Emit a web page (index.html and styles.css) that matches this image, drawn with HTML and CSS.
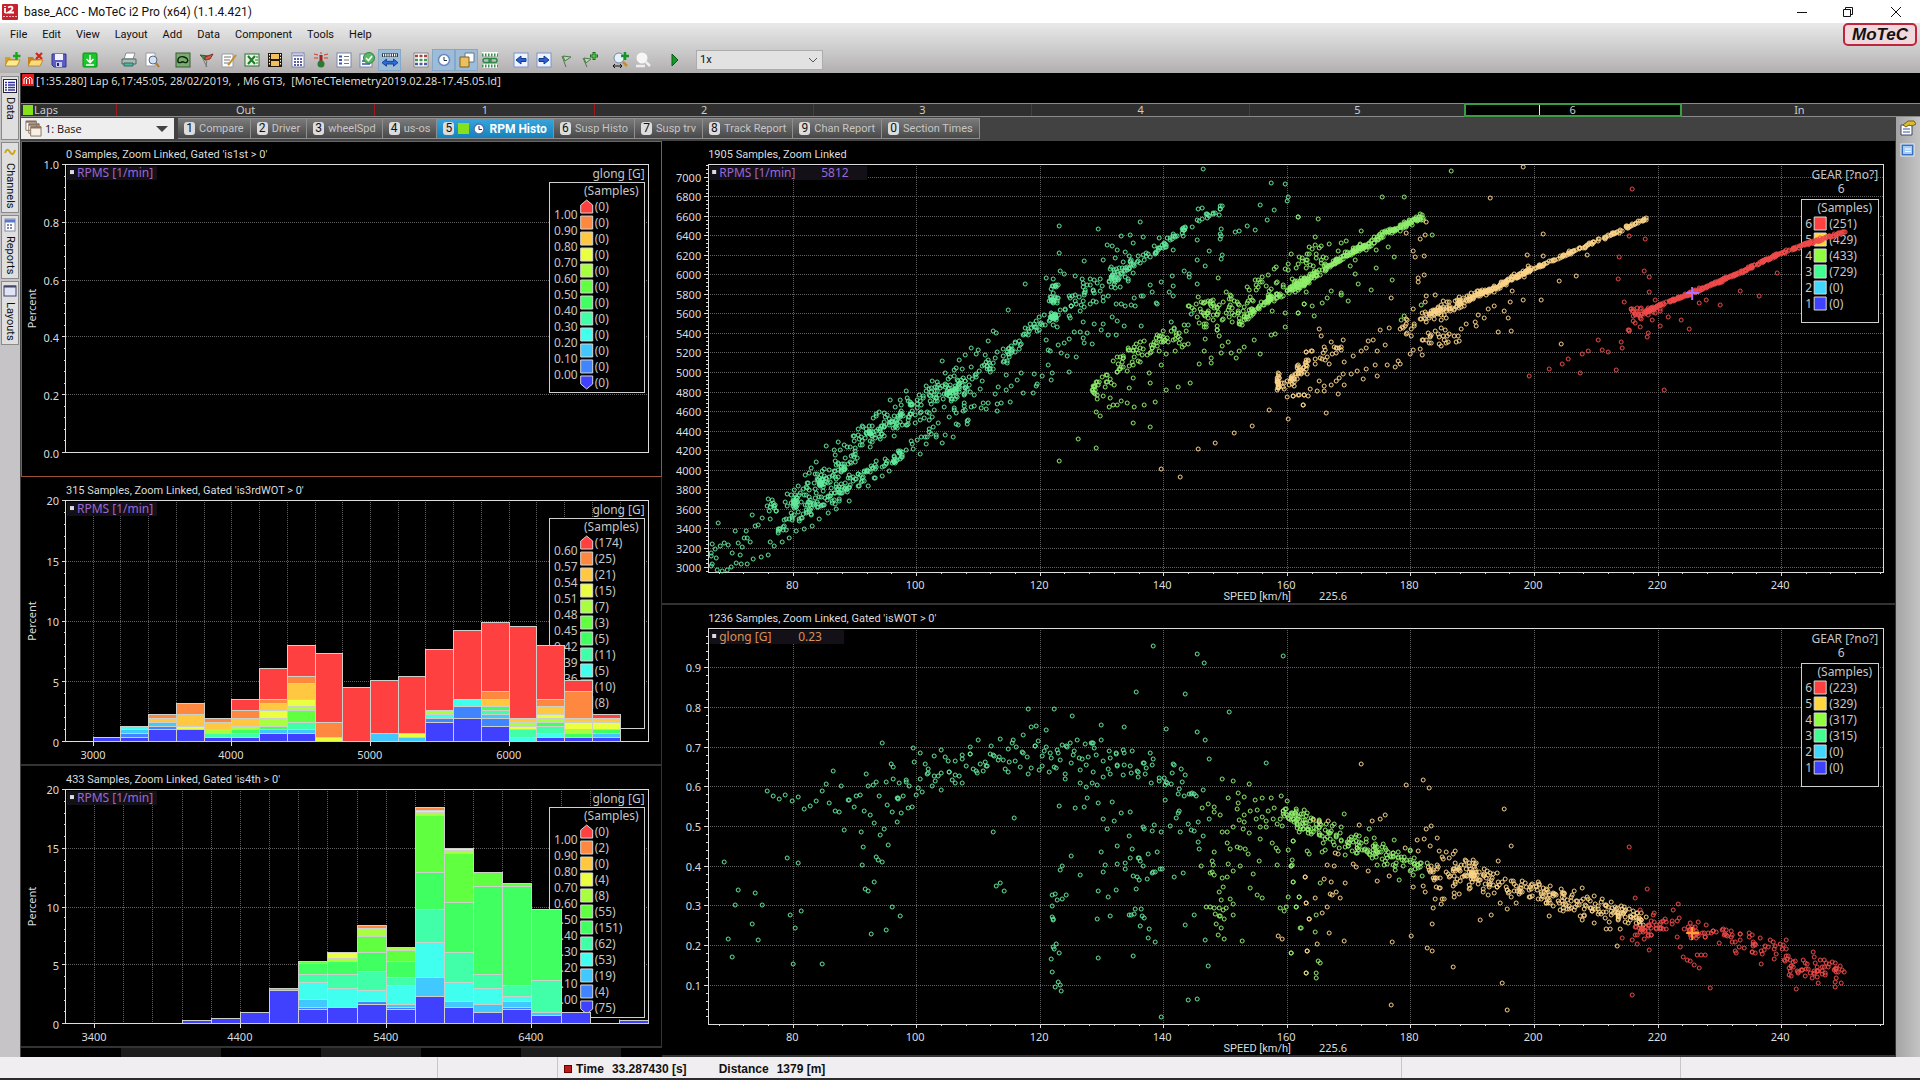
FILE: index.html
```html
<!DOCTYPE html>
<html lang="en">
<head>
<meta charset="utf-8">
<title>base_ACC - MoTeC i2 Pro (x64) (1.1.4.421)</title>
<link rel="stylesheet" href="styles.css">
</head>
<body>
<header class="titlebar">
  <svg class="app-icon" viewBox="0 0 16 16"><rect width="16" height="16" rx="1" fill="#c8202c"/><path d="M3 4v5M3 2v1M6 3.500q4-2 4.500.5q0 2-4.500 4.500h6" fill="none" stroke="#fff" stroke-width="1.800"/><path d="M1 12.500h14" stroke="#f3b4b8" stroke-dasharray="2 1"/></svg>
  <h1 class="title">base_ACC - MoTeC i2 Pro (x64) (1.1.4.421)</h1>
  <div class="window-buttons">
    <button aria-label="Minimize"><svg viewBox="0 0 12 12"><path d="M1 6.500h10"/></svg></button>
    <button aria-label="Restore"><svg viewBox="0 0 12 12"><path d="M1.500 3.500h7v7h-7zM3.500 3V1.500h7v7H9"/></svg></button>
    <button aria-label="Close"><svg viewBox="0 0 12 12"><path d="M1 1l10 10M11 1L1 11"/></svg></button>
  </div>
</header>

<div class="command-area">
  <div class="menu-row">
    <nav class="menu">
      <button>File</button><button>Edit</button><button>View</button><button>Layout</button><button>Add</button><button>Data</button><button>Component</button><button>Tools</button><button>Help</button>
    </nav>
    <div class="brand">MoTeC</div>
  </div>
  <div class="toolbar">
    <div class="tool-group">
      <button aria-label="Open log file"><svg viewBox="0 0 16 16"><path d="M0 14V5h5l1 2h6v7z" fill="#d8a020"/><path d="M0 14l3-6h12l-3 6z" fill="#ffe98a" stroke="#a87810" stroke-width=".7"/><path d="M11.500 0v8M8 4h7.500" stroke="#18a818" stroke-width="2.400"/></svg></button>
      <button aria-label="Close log file"><svg viewBox="0 0 16 16"><path d="M0 14V5h5l1 2h6v7z" fill="#c88018"/><path d="M0 14l3-6h12l-3 6z" fill="#ffd87a" stroke="#a87810" stroke-width=".7"/><path d="M8 1l6 6M14 1L8 7" stroke="#d02818" stroke-width="2.200"/></svg></button>
      <button aria-label="Save"><svg viewBox="0 0 16 16"><path d="M1 2h14v13H3l-2-2z" fill="#5c5cc4" stroke="#34348c"/><path d="M4 2h8v6H4z" fill="#f0f2ff"/><path d="M5 10h6v5H5z" fill="#c8ccea"/><path d="M6 11h2v3H6z" fill="#26267a"/></svg></button>
    </div>
    <div class="tool-group">
      <button aria-label="Download"><svg viewBox="0 0 16 16"><rect x="1" y="1" width="14" height="14" rx="1" fill="#18c828" stroke="#0c8c1a"/><path d="M8 3v7M4.500 7L8 10.500 11.500 7M4 13h8" fill="none" stroke="#fff" stroke-width="1.600"/></svg></button>
    </div>
    <div class="tool-group spaced">
      <button aria-label="Print"><svg viewBox="0 0 16 16"><path d="M5 1h9l-2 6H3z" fill="#fff" stroke="#889"/><path d="M1 7h14v5H1z" fill="#a8bcb4" stroke="#4a6a62"/><path d="M3 11h9v3H3z" fill="#48b8a0" stroke="#3a6a62"/></svg></button>
      <button aria-label="Print preview"><svg viewBox="0 0 16 16"><path d="M2 1h9v13H2z" fill="#fff" stroke="#99a"/><circle cx="9" cy="8" r="4" fill="#cfe4fa" stroke="#667"/><path d="M12 11l3 4" stroke="#b07820" stroke-width="2"/></svg></button>
    </div>
    <div class="tool-group">
      <button aria-label="Track map"><svg viewBox="0 0 16 16"><rect x="1" y="1" width="14" height="14" fill="#7aac72" stroke="#385c34"/><path d="M3 10c-1-5 3-6 6-5s5 3 3 5-3-1-5 0-3 1-4 0z" fill="none" stroke="#0a2408" stroke-width="1.400"/></svg></button>
      <button aria-label="Events"><svg viewBox="0 0 16 16"><path d="M2 3l8 1-3 4z" fill="#488838" stroke="#355"/><path d="M7 5l8-3-3 5-5 1z" fill="#d85838" stroke="#733"/><path d="M4 5l5 10M9 7l-1 8" stroke="#777"/></svg></button>
      <button aria-label="Edit notes"><svg viewBox="0 0 16 16"><path d="M1 2h11v13H1z" fill="#fff" stroke="#99a"/><path d="M3 5h7M3 8h6M3 11h5" stroke="#777"/><path d="M15 3l-7 9-1 1" stroke="#c09028" stroke-width="2"/></svg></button>
      <button aria-label="Export to Excel"><svg viewBox="0 0 16 16"><rect x="1" y="2" width="14" height="12" fill="#e8f4e4" stroke="#2c7030"/><path d="M4 4l7 8M11 4l-7 8" stroke="#1f7a28" stroke-width="2"/><path d="M11 8h3M12 5h2M12 11h2" stroke="#1f7a28"/></svg></button>
      <button aria-label="Video"><svg viewBox="0 0 16 16"><rect x="1" y="1" width="14" height="14" fill="#241808"/><path d="M4 2h8v5H4zM4 9h8v5H4z" fill="#f0c060"/><path d="M2.500 2v12M13.500 2v12" stroke="#fff" stroke-dasharray="1.500 1.500"/></svg></button>
      <button aria-label="Maths"><svg viewBox="0 0 16 16"><rect x="2" y="1" width="12" height="14" fill="#fff" stroke="#7880b0"/><path d="M3 3.500h10" stroke="#8890c8" stroke-width="2"/><path d="M4 7h8M4 10h8M4 13h8" stroke="#5860a0" stroke-width="1.800" stroke-dasharray="2 1"/></svg></button>
      <button aria-label="Alarms"><svg viewBox="0 0 16 16"><path d="M8 3v9" stroke="#a02020" stroke-width="3"/><circle cx="8" cy="12" r="3.500" fill="#2a7a34"/><path d="M1 2l4 1M1 6h4M15 2l-4 1M15 6h-4M8 0v2" stroke="#d83828"/></svg></button>
      <button aria-label="Details"><svg viewBox="0 0 16 16"><rect x="1" y="1" width="14" height="14" fill="#fff" stroke="#7a88a8"/><path d="M3 4.500h3M3 8h3M3 11.500h3" stroke="#3858a8" stroke-width="2"/><path d="M8 4.500h5M8 8h5M8 11.500h5" stroke="#777"/></svg></button>
      <button aria-label="Check channels"><svg viewBox="0 0 16 16"><rect x="1" y="2" width="12" height="13" fill="#fff" stroke="#7a88a8"/><path d="M3 12h8M3 9h3" stroke="#3858a8" stroke-width="1.500"/><circle cx="10" cy="6" r="5.500" fill="#58b868" stroke="#358044"/><path d="M7 6l2.500 2.500L13 4" fill="none" stroke="#fff" stroke-width="1.600"/></svg></button>
      <button class="on" aria-label="Zoom linked"><svg viewBox="0 0 18 16"><path d="M0 2.500h18" stroke="#123" stroke-width="4"/><path d="M1 2.500h16" stroke="#fff" stroke-width="3" stroke-dasharray="1.500 1"/><path d="M0 11l5-4v2.500h8V7l5 4-5 4v-2.500H5V15z" fill="#2c6cd8" stroke="#123c8c"/></svg></button>
    </div>
    <div class="tool-group">
      <button aria-label="Channel grid"><svg viewBox="0 0 16 16"><rect x="1" y="1" width="14" height="14" fill="#fff" stroke="#888"/><path d="M2 4h12" stroke="#a04848" stroke-width="2.500" stroke-dasharray="3 1.500"/><path d="M2 8h12" stroke="#48984c" stroke-width="2.500" stroke-dasharray="3 1.500"/><path d="M2 12h12" stroke="#4858a8" stroke-width="2.500" stroke-dasharray="3 1.500"/></svg></button>
      <button class="on" aria-label="Time mode"><svg viewBox="0 0 16 16"><circle cx="8" cy="8" r="5.500" fill="#fff" stroke="#6888c4" stroke-width="1.500"/><path d="M8 5v3.500h3" fill="none" stroke="#234"/></svg></button>
      <button class="on" aria-label="Overlays"><svg viewBox="0 0 16 16"><path d="M6 1h9v9H6z" fill="#fff" stroke="#678"/><path d="M1 5h9v10H1z" fill="#ecc060" stroke="#80601c"/></svg></button>
      <button aria-label="Link ranges"><svg viewBox="0 0 16 16"><path d="M0 2h16M0 14h16" stroke="#f4fff6" stroke-width="4"/><path d="M0 3h16M0 14h16" stroke="#468a56" stroke-width="3" stroke-dasharray="1.500 1.500"/><rect x="1" y="6.500" width="8" height="4" rx="2" fill="none" stroke="#2f8848" stroke-width="1.500"/><rect x="7" y="6.500" width="8" height="4" rx="2" fill="none" stroke="#2f8848" stroke-width="1.500"/></svg></button>
    </div>
    <div class="tool-group">
      <button aria-label="Previous lap"><svg viewBox="0 0 16 16"><rect x="1" y="1" width="14" height="14" fill="#eef4ff" stroke="#7a94cc"/><path d="M3 8l5-4v2.500h5v3H8V12z" fill="#2c60d0" stroke="#123c8c"/></svg></button>
      <button aria-label="Next lap"><svg viewBox="0 0 16 16"><rect x="1" y="1" width="14" height="14" fill="#eef4ff" stroke="#7a94cc"/><path d="M13 8L8 4v2.500H3v3h5V12z" fill="#2c60d0" stroke="#123c8c"/></svg></button>
      <button aria-label="Marker"><svg viewBox="0 0 16 16"><path d="M3 4l4 11M4 4l8 1-6 4z" fill="#b8dcae" stroke="#4c7a4c"/></svg></button>
      <button aria-label="Add marker"><svg viewBox="0 0 16 16"><path d="M1 6l4 9M2 6l7 1-5 4z" fill="#b8dcae" stroke="#4c7a4c"/><path d="M12 0v8M8 4h8" stroke="#1c6c20" stroke-width="3"/><path d="M12 1v6M9 4h6" stroke="#60e050"/></svg></button>
    </div>
    <div class="tool-group">
      <button aria-label="Zoom in"><svg viewBox="0 0 16 16"><circle cx="6" cy="6" r="5" fill="#e4f2fc" stroke="#789"/><path d="M10 10l4 4" stroke="#c09030" stroke-width="2.500"/><path d="M12 0v8M8 4h8" stroke="#18942a" stroke-width="2.500"/><path d="M0 14h9M2 12l-2 2 2 2M7 12l2 2-2 2" fill="none" stroke="#111"/></svg></button>
      <button aria-label="Zoom out" disabled><svg viewBox="0 0 16 16"><circle cx="6" cy="6" r="5.500" fill="#f6f6f6"/><path d="M10 10l4 4M0 14h9" stroke="#eee" stroke-width="2.500"/></svg></button>
    </div>
    <div class="tool-group">
      <button aria-label="Play"><svg viewBox="0 0 16 16"><path d="M5 2l6 6-6 6z" fill="#109a28" stroke="#0c5c18"/></svg></button>
    </div>
    <div class="speed-box">
      <select aria-label="Playback speed"><option>1x</option></select>
      <svg viewBox="0 0 10 6"><path d="M1 1l4 4 4-4" fill="none" stroke="#555"/></svg>
    </div>
  </div>
</div>

<main class="body">
  <aside class="side-tabs">
    <button><svg viewBox="0 0 14 14"><rect x=".5" y=".5" width="13" height="13" fill="#fff" stroke="#223"/><path d="M2 3.500h10M2 6h10M2 8.500h10M2 11h10" stroke="#3030a0" stroke-width="1.500"/><path d="M4.500 1v12" stroke="#fff"/></svg><span>Data</span></button>
    <button><svg viewBox="0 0 14 14"><path d="M2 8q2-6 5-1t5-2" fill="none" stroke="#c8a818" stroke-width="2"/></svg><span>Channels</span></button>
    <button><svg viewBox="0 0 14 14"><rect x="2" y="1" width="10" height="12" fill="#fff" stroke="#88a"/><path d="M2 3h10" stroke="#5878c8" stroke-width="3"/><path d="M4 7h6M4 10h6" stroke="#88a" stroke-width="2" stroke-dasharray="2 1"/></svg><span>Reports</span></button>
    <button><svg viewBox="0 0 14 14"><rect x="1" y="2" width="12" height="10" fill="#dfe4f6" stroke="#446"/><path d="M1 2.500h12" stroke="#446" stroke-width="2"/></svg><span>Layouts</span></button>
  </aside>

  <section class="center">
    <div class="log-info">
      <svg viewBox="0 0 12 12"><rect width="12" height="12" fill="#e02020"/><path d="M2 10V5l2-2 2 2 2-2 2 2v5M4.500 5v5M7.500 5v5" fill="none" stroke="#fff"/></svg>
      <span>[1:35.280] Lap 6,17:45:05, 28/02/2019,&nbsp; , M6 GT3,&nbsp; [MoTeCTelemetry2019.02.28-17.45.05.ld]</span>
    </div>
    <div class="laps">
      <div class="laps-label"><i></i>Laps</div>
      <ol>
        <li class="w258">Out</li><li class="w220">1</li><li class="w218">2</li><li class="w218">3</li><li class="w218">4</li><li class="w215">5</li><li class="w217 current">6</li><li class="w238">In</li>
      </ol>
    </div>
    <div class="lower">
      <div class="work">
        <div class="sheet-row">
          <div class="layout-box">
            <svg viewBox="0 0 18 18"><path d="M1 1h11v10H1zM4 4h11v10H4z" fill="#fff" stroke="#8a7460"/><path d="M6 7h11v10H6z" fill="#f8f0e4" stroke="#8a7460"/><path d="M1 2h11M4 5h11M6 8h11" stroke="#8a7460" stroke-width="2"/></svg>
            <select aria-label="Workbook"><option>1: Base</option></select>
            <svg class="arrow" viewBox="0 0 12 6"><path d="M0 0h12L6 6z" fill="#444"/></svg>
          </div>
          <div class="sheets">
            <button><b>1</b>Compare</button><button><b>2</b>Driver</button><button><b>3</b>wheelSpd</button><button><b>4</b>us-os</button><button class="active"><b>5</b><i></i><svg viewBox="0 0 12 12"><circle cx="6" cy="6" r="5" fill="#fff" stroke="#5070b0" stroke-width="1.500"/><path d="M6 3v3.500h3" fill="none" stroke="#234"/></svg>RPM Histo</button><button><b>6</b>Susp Histo</button><button><b>7</b>Susp trv</button><button><b>8</b>Track Report</button><button><b>9</b>Chan Report</button><button><b>0</b>Section Times</button>
          </div>
        </div>
        <div class="workspace">
          <div class="column histograms">
            <div class="panel selected" id="histo-1st"></div>
            <div class="panel" id="histo-3rd"></div>
            <div class="panel" id="histo-4th"></div>
            <div class="scroll-strip"></div>
          </div>
          <div class="column scatters">
            <div class="panel" id="scatter-rpm"></div>
            <div class="panel" id="scatter-glong"></div>
          </div>
        </div>
      </div>
      <aside class="right-bar">
        <button aria-label="Properties"><svg viewBox="0 0 16 16"><path d="M1 5h11v10H1z" fill="#fff" stroke="#446"/><path d="M3 9h7M3 12h7" stroke="#3850a8"/><path d="M3 5l5-4 6 0 2 3-4 2-3-1-3 2z" fill="#d8bc30" stroke="#776010"/></svg></button>
        <button aria-label="Component view"><svg viewBox="0 0 16 16"><rect x="1" y="2" width="13" height="12" fill="#3870c0" stroke="#e8f0fa"/><path d="M3 4h9v8H3z" fill="#a8ccf4"/><path d="M5 7h6M5 9.500h6" stroke="#fff"/></svg></button>
      </aside>
    </div>
  </section>
</main>

<footer class="status">
  <div class="s439"></div><div class="s120"></div>
  <div class="s841 readout"><i></i><span>Time</span><span>33.287430 [s]</span><span class="dist">Distance</span><span>1379 [m]</span></div>
  <div class="s280"></div><div class="s240"></div>
</footer>
<script src="charts.js"></script>
</body>
</html>
```
FILE: styles.css
```css
* { box-sizing: border-box; }
html, body { height: 100%; }
body {
  margin: 0;
  display: flex;
  flex-direction: column;
  background: #000;
  font: 12px/14px "Roboto", sans-serif;
  color: #111;
  overflow: hidden;
}
button {
  border: 0;
  padding: 0;
  background: none;
  font: inherit;
  color: inherit;
}
svg { display: block; flex: none; }

/* Title bar */
.titlebar {
  flex: none;
  height: 23px;
  display: flex;
  align-items: center;
  background: #fff;
  padding-left: 2px;
}
.app-icon { width: 16px; height: 16px; }
.title { flex: 1; margin: 0 0 0 6px; font: 12px/16px "Roboto", sans-serif; }
.window-buttons { display: flex; }
.window-buttons button { width: 46px; display: grid; place-items: center; }
.window-buttons button:last-child { width: 49px; }
.window-buttons svg { width: 12px; height: 12px; fill: none; stroke: #111; }

/* Menu and toolbar */
.command-area {
  flex: none;
  height: 50px;
  background: linear-gradient(#e9e9e9, #c9c8c8 60%, #b1aeaf);
}
.menu-row { height: 24px; display: flex; justify-content: space-between; align-items: flex-start; }
.menu { display: flex; gap: 15px; padding: 5px 0 0 10px; font-size: 11px; line-height: 14px; }
.brand {
  width: 74px;
  height: 23px;
  margin-right: 3px;
  border: 2px solid #c0243c;
  border-radius: 5px;
  background: #f0d8dc;
  font: italic bold 17px/19px "Liberation Sans", sans-serif;
  text-align: center;
}
.toolbar { display: flex; align-items: center; gap: 8px; height: 25px; padding-left: 1px; }
.tool-group { display: flex; }
.tool-group.spaced { margin-left: 8px; }
.tool-group button { width: 23px; height: 22px; display: grid; place-items: center; }
.tool-group button.on { background: #9cbcd8; box-shadow: inset 0 0 0 1px #86a8c8; }
.tool-group svg { width: 16px; height: 16px; }
.speed-box {
  width: 127px;
  height: 20px;
  margin-left: 2px;
  display: flex;
  align-items: center;
  background: #e2e2e2;
  border: 1px solid #acacac;
  padding-right: 4px;
}
.speed-box svg { width: 10px; height: 6px; }
select { appearance: none; border: 0; background: none; flex: 1; min-width: 0; padding: 0; color: #111; }
.speed-box select { font: 11px/16px "Roboto", sans-serif; padding-left: 3px; }

/* Main body */
.body { flex: 1; min-height: 0; display: flex; }
.side-tabs {
  flex: none;
  width: 20px;
  padding: 3px 1px 0;
  display: flex;
  flex-direction: column;
  gap: 2px;
  background: #c6c4c6;
}
.side-tabs button {
  width: 18px;
  height: 64px;
  display: flex;
  flex-direction: column;
  align-items: center;
  justify-content: flex-start;
  gap: 4px;
  padding-top: 2px;
  border: 1px solid #8a8a8a;
  background: #e0dfe0;
  font: 11px/14px "Roboto", sans-serif;
}
.side-tabs button:nth-child(2) { height: 71px; }
.side-tabs svg { width: 14px; height: 14px; }
.side-tabs span { writing-mode: vertical-rl; }

.center { flex: 1; min-width: 0; display: flex; flex-direction: column; border-left: 1px solid #444; }
.log-info {
  flex: none;
  height: 30px;
  display: flex;
  gap: 2px;
  padding: 1px 0 0 1px;
  color: #d8d8d8;
  font: 11px/13px "Noto Sans", sans-serif;
}
.log-info svg { width: 12px; height: 12px; }
.laps {
  flex: none;
  height: 14px;
  display: flex;
  padding-right: 2px;
  background: #2f2f30;
  border: solid #8a8a8a;
  border-width: 1px 0;
  color: #ccc;
  font: 11px/12px "Noto Sans", sans-serif;
}
.laps-label { width: 95px; display: flex; align-items: center; gap: 1px; padding-left: 2px; }
.laps-label i { width: 10px; height: 10px; background: #86e01c; }
.laps ol { flex: 1; display: flex; margin: 0; padding: 0; list-style: none; text-align: center; }
.laps li { border-left: 1px solid #a01818; }
.w258 { flex: 258; } .w220 { flex: 220; } .w218 { flex: 218; } .w215 { flex: 215; } .w217 { flex: 217; } .w238 { flex: 238; }
.laps .current {
  background: linear-gradient(90deg, transparent 74px, #f4f4b0 74px, #f4f4b0 75px, transparent 75px), #000;
  outline: 2px solid #3c9c44;
  outline-offset: -1px;
  border: 0;
}
.laps .current + li { border: 0; }
.lower { flex: 1; min-height: 0; display: flex; }
.work { flex: 1; min-width: 0; display: flex; flex-direction: column; }

/* Worksheet selector */
.sheet-row { flex: none; height: 24px; display: flex; gap: 4px; background: #424242; padding-top: 1px; }
.layout-box { width: 153px; height: 21px; display: flex; align-items: center; gap: 3px; background: #eee; padding: 0 6px 0 4px; }
.layout-box svg { width: 17px; height: 17px; }
.layout-box .arrow { width: 12px; height: 6px; }
.layout-box select { font: 11px/16px "Open Sans", sans-serif; }
.sheets { display: flex; height: 21px; }
.sheets button {
  display: flex;
  align-items: center;
  gap: 4px;
  padding: 0 6px;
  background: linear-gradient(#7a7a7a, #484848);
  border: solid #8e8e8e;
  border-width: 1px 1px 1px 0;
  color: #c6c6c6;
  font: 11px/16px "Roboto", sans-serif;
  white-space: nowrap;
}
.sheets b { width: 11px; height: 13px; border-radius: 3px; background: #dcdcdc; color: #111; font: 12px/13px "Roboto", sans-serif; text-align: center; }
.sheets i { width: 11px; height: 11px; background: #86e01c; }
.sheets svg { width: 12px; height: 12px; }
.sheets .active { background: linear-gradient(#38a4dc, #1482bc); color: #fff; font-weight: bold; font-size: 12px; }

/* Chart workspace */
.workspace { flex: 1; min-height: 0; display: grid; grid-template-columns: 641fr 1235fr; }
.column { display: grid; min-width: 0; min-height: 0; }
.histograms { grid-template-rows: 336fr 289fr 282fr 9fr; }
.scatters { grid-template-rows: 464fr 452fr; }
.panel { min-width: 0; min-height: 0; overflow: hidden; box-shadow: inset -1px -2px #333; }
.panel.selected { box-shadow: inset 0 0 0 1px #9c5436; }
.scroll-strip { background: repeating-linear-gradient(90deg, #000 0, #000 100px, #1c1c1c 100px, #1c1c1c 200px); }
.right-bar {
  flex: none;
  width: 24px;
  display: flex;
  flex-direction: column;
  align-items: center;
  gap: 6px;
  padding-top: 3px;
  background: linear-gradient(90deg, #a4a4a4, #c4c4c4);
}
.right-bar svg { width: 16px; height: 16px; }

/* Chart drawing */
.chart { width: 100%; height: 100%; font-family: "Noto Sans", sans-serif; fill: #dcdcdc; font-size: 11px; }
.chart .caption { font-family: "Roboto", sans-serif; }
.chart .big { font-size: 12px; fill: #c6c6c6; }
.chart .purple { fill: #9c68d4; }
.chart .orange { fill: #d89058; }
.chart .line { shape-rendering: crispEdges; fill: none; stroke: #dcdcdc; }
.chart .grid { shape-rendering: crispEdges; fill: none; stroke: #606060; stroke-dasharray: 1 1; }
.chart .tag { fill: #141018; }
.chart .box { shape-rendering: crispEdges; fill: #000; stroke: #d0d0d0; }
.chart .swatch { stroke: #d8d8d8; }
.chart .bar { shape-rendering: crispEdges; stroke: #ccd0c8; }
.chart .dots { fill: none; stroke-width: 1; }
.chart .cursor { fill: none; stroke-width: 2; }

/* Status bar */
.status {
  flex: none;
  height: 23px;
  display: flex;
  background: #f0eef0;
  border-bottom: 2px solid #2c2c30;
  font: bold 12px/14px "Liberation Sans", sans-serif;
}
.status > div + div { border-left: 1px solid #c8c6c8; }
.s439 { flex: 439; } .s120 { flex: 120; } .s841 { flex: 841; } .s280 { flex: 280; } .s240 { flex: 240; }
.readout { display: flex; align-items: center; gap: 8px; padding: 3px 0 0 6px; }
.readout i { width: 8px; height: 8px; margin-right: -4px; background: #c01818; border: 1px solid #600; }
.readout .dist { margin-left: 24px; }
```
FILE: charts.js
```js
const NS = 'http://www.w3.org/2000/svg';
const RAINBOW = ['#ff4040', '#ff8840', '#ffc840', '#eaff40', '#a8ff40', '#60ff40',
  '#40ff60', '#40ffa8', '#40ffee', '#40c8ff', '#4084ff', '#4040ff'];
const GEAR_FILL = { 6: '#ff4040', 5: '#ffd840', 4: '#90ff40', 3: '#40ff90', 2: '#40d8ff', 1: '#4040ff' };
const GEAR_DOT = { 6: '#f04a4a', 5: '#fbd488', 4: '#90f06c', 3: '#62ea9c' };

function add(parent, tag, attrs, text) {
  const el = document.createElementNS(NS, tag);
  for (const k in attrs) el.setAttribute(k, attrs[k]);
  if (text !== undefined) el.textContent = text;
  parent.appendChild(el);
  return el;
}

// Frame, grid, ticks and labels shared by both chart types.
function frame(id, c) {
  const host = document.getElementById(id);
  const W = host.clientWidth, H = host.clientHeight;
  host.textContent = '';
  const svg = add(host, 'svg', { class: 'chart', viewBox: `0 0 ${W} ${H}` });
  const m = c.margin;
  const L = m.left, T = m.top, R = W - m.right, B = H - m.bottom;
  const X = v => L + (v - c.x.min) / (c.x.max - c.x.min) * (R - L);
  const Y = v => B - (v - c.y.min) / (c.y.max - c.y.min) * (B - T);
  let grid = '', line = '';
  const each = (min, max, step, fn) => {
    for (let i = Math.ceil(min / step - 1e-6); i * step <= max + 1e-6; i++) fn(i * step);
  };
  each(c.y.min, c.y.max, c.y.step, v => {
    const y = Math.round(Y(v));
    if (y > T + 2 && y < B - 2) grid += `M${L} ${y}H${R}`;
    line += `M${L - 4} ${y}H${L}`;
    add(svg, 'text', { x: L - 7, y: y + 5, 'text-anchor': 'end' }, v.toFixed(c.y.digits));
  });
  each(c.y.min, c.y.max, c.y.minor, v => { line += `M${L - 2} ${Math.round(Y(v))}H${L}`; });
  if (c.x.step) {
    each(c.x.min, c.x.max, c.x.grid, v => {
      const x = Math.round(X(v));
      if (x > L + 2 && x < R - 2) grid += `M${x} ${T}V${B}`;
    });
    for (let v = c.x.first; v <= c.x.max - 10; v += c.x.step) {
      const x = Math.round(X(v));
      line += `M${x} ${B}v4`;
      add(svg, 'text', { x: x - 1, y: B + 17, 'text-anchor': 'middle' }, v);
    }
    if (c.x.minor) each(c.x.min, c.x.max, c.x.minor, v => { line += `M${Math.round(X(v))} ${B}v2`; });
  }
  add(svg, 'path', { class: 'grid', d: grid });
  add(svg, 'path', { class: 'line', d: line + `M${L} ${T}H${R}V${B}H${L}Z` });
  add(svg, 'text', { class: 'caption', x: L, y: T - 6 }, c.title);
  add(svg, 'rect', { class: 'tag', x: L + 1, y: T + 2, width: c.tagWidth, height: 14 });
  add(svg, 'rect', { x: L + 4, y: T + 6, width: 4, height: 4 });
  add(svg, 'text', { class: 'big ' + c.tone, x: L + 11, y: T + 13 }, c.channel);
  if (c.value) add(svg, 'text', { class: 'big ' + c.tone, x: L + c.valueX, y: T + 13 }, c.value);
  if (c.percent) {
    const cy = (T + B) / 2;
    add(svg, 'text', { x: 0, y: 0, transform: `translate(15 ${cy}) rotate(-90)`, 'text-anchor': 'middle' }, 'Percent');
  }
  return { svg, L, T, R, B, X, Y };
}

function swatch(svg, x, y, fill, shape) {
  const d = shape === 'up' ? `M${x} ${y + 13}v-8l6-5 6 5v8z`
    : shape === 'down' ? `M${x} ${y}h12v8l-6 5-6-5z`
    : `M${x} ${y}h12v13h-12z`;
  add(svg, 'path', { class: 'swatch', d, fill });
}

function histogram(id, c) {
  const f = frame(id, Object.assign({
    margin: { left: 45, right: 13, top: 23, bottom: 24 }, tone: 'purple',
    channel: 'RPMS [1/min]', tagWidth: 90, percent: true
  }, c));
  const { svg, R, T } = f;
  add(svg, 'text', { class: 'big', x: R - 4, y: T + 14, 'text-anchor': 'end' }, 'glong [G]');
  add(svg, 'rect', { class: 'box', x: R - 99, y: T + 18, width: 95, height: 211 });
  add(svg, 'text', { class: 'big', x: R - 10, y: T + 31, 'text-anchor': 'end' }, '(Samples)');
  c.counts.forEach((n, i) => {
    const y = T + 36 + 16 * i;
    if (i < 11) add(svg, 'text', { class: 'big', x: R - 71, y: y + 19, 'text-anchor': 'end' }, c.levels[i].toFixed(2));
    swatch(svg, R - 68, y, RAINBOW[i], i === 0 ? 'up' : i === 11 ? 'down' : '');
    add(svg, 'text', { class: 'big', x: R - 54, y: y + 11 }, `(${n})`);
  });
  // Each bin is a stack of [colour index, sample count], from the axis up.
  for (const start in c.bins) {
    const x0 = Math.round(f.X(+start)), x1 = Math.round(f.X(+start + 200));
    let sum = 0;
    for (const [k, n] of c.bins[start]) {
      const y1 = Math.round(f.Y(sum * 100 / c.total));
      sum += n;
      const y0 = Math.round(f.Y(sum * 100 / c.total));
      add(svg, 'rect', { class: 'bar', x: x0, y: y0, width: x1 - x0, height: y1 - y0, fill: RAINBOW[k] });
    }
  }
}

function scatter(id, c) {
  const f = frame(id, Object.assign({ margin: { left: 46, right: 13, top: 23, bottom: 33 } }, c));
  const { svg, R, T, B } = f;
  const mid = f.X(160);
  add(svg, 'text', { class: 'caption', x: mid + 4, y: B + 28, 'text-anchor': 'end' }, 'SPEED [km/h]');
  add(svg, 'text', { x: mid + 32, y: B + 28 }, '225.6');
  add(svg, 'text', { class: 'big', x: R - 5, y: T + 15, 'text-anchor': 'end' }, 'GEAR [?no?]');
  add(svg, 'text', { class: 'big', x: R - 42, y: T + 29, 'text-anchor': 'middle' }, '6');
  add(svg, 'rect', { class: 'box', x: R - 82, y: T + 35, width: 77, height: 123 });
  add(svg, 'text', { class: 'big', x: R - 11, y: T + 48, 'text-anchor': 'end' }, '(Samples)');
  c.counts.forEach((n, i) => {
    const y = T + 53 + 16 * i;
    add(svg, 'text', { class: 'big', x: R - 71, y: y + 11, 'text-anchor': 'end' }, 6 - i);
    swatch(svg, R - 69, y, GEAR_FILL[6 - i]);
    add(svg, 'text', { class: 'big', x: R - 54, y: y + 11 }, `(${n})`);
  });
  for (const g of [3, 4, 5, 6]) {
    const d = c.points[g].map(([s, v]) => [f.X(s), f.Y(v)])
      .filter(([x, y]) => x >= f.L && y > T && y < B)
      .map(([x, y]) => `M${Math.round(x) - 2} ${Math.round(y)}a2 2 0 1 0 4 0a2 2 0 1 0-4 0`).join('');
    add(svg, 'path', { class: 'dots', d, stroke: GEAR_DOT[g] });
  }
  const cx = Math.round(f.X(225.6)), cy = Math.round(f.Y(c.cursor));
  add(svg, 'path', { class: 'cursor', d: `M${cx - 6} ${cy}h13M${cx} ${cy - 6}v13`, stroke: c.cursorColor });
}

// Repeatable noise for the dense parts of the trace.
let seed = 7;
const rnd = () => (seed = (seed * 16807) % 2147483647) / 2147483647;
const bell = () => rnd() + rnd() + rnd() + rnd() - 2;

function band(count, spread, path) {
  const p = [];
  let len = 0;
  for (let i = 2; i < path.length; i += 2) p.push(len += Math.hypot(path[i] - path[i - 2], path[i + 1] - path[i - 1]));
  const out = [];
  for (let n = 0; n < count; n++) {
    const t = rnd() * len;
    const k = p.findIndex(v => v >= t);
    const a = k ? p[k - 1] : 0, q = (t - a) / (p[k] - a), i = 2 * k;
    out.push(path[i] + q * (path[i + 2] - path[i]) + bell() * spread * .6,
      path[i + 1] + q * (path[i + 3] - path[i + 1]) + bell() * spread * 1.8);
  }
  return out;
}
const spot = (x, y, n, s) => band(n, s, [x - s, y, x + s, y]);

function decode(low, high, toValue) {
  const out = [];
  for (let i = 0; i < low.length; i += 2) out.push([80 + (low[i] - 260.5) / 15.624, toValue(low[i + 1])]);
  for (let i = 0; i < high.length; i += 2) out.push([180 + (high[i] - 300) / 15.377, toValue(high[i + 1])]);
  return out;
}
const rpm = v => 7000 - (v - 112) / .2925;
const glong = v => .9 - (v - 205) / 1185;

const rpmPoints = {
  3: decode([
    ...band(270, 20, [245,1085, 300,1060, 330,1020, 380,965, 440,900, 500,850, 570,800, 650,765, 710,715]),
    ...band(90, 12, [650,765, 710,715, 790,655, 850,590, 920,530]),
    ...band(80, 20, [920,530, 980,475, 1060,425, 1130,370]),
    ...band(70, 6, [1060,425, 1130,365, 1190,325, 1250,270, 1300,235, 1342,205]),
    ...band(110, 10, [205,1180, 260,1138, 320,1095, 390,1040, 450,992, 540,945]),
    ...band(80, 20, [320,1100, 400,1060, 460,1015, 540,940, 600,885, 660,835, 720,800, 790,750, 840,740]),
    ...spot(265,1093,18,5), ...spot(330,1030,14,6), ...spot(388,988,12,6), ...spot(920,533,26,6),
    ...spot(920,482,18,11), ...spot(925,440,10,7), ...spot(1250,267,8,4), ...spot(455,880,8,4), ...spot(210,1105,9,9),
    935,259,935,340,848,433,805,511,768,574,775,580,755,604,712,626,729,631,725,642,747,646,697,646,681,661,638,664,674,685,688,688,646,700,669,710,654,718,613,724,626,727,611,745,547,754,471,823,492,820,436,859,345,919,375,907,320,967,308,985,302,999,292,1005,275,1040,246,1064,198,1078,208,1081,196,1100,213,1100,158,1126,183,1135,202,1138,72,1150,166,1160,172,1156,115,1174,143,1174,138,1195,146,1195,152,1207,122,1210,132,1222,107,1240,127,1246,57,1213,63,1228,77,1219,87,1210,97,1216,54,1240,66,1255,54,1250,57,1273,54,1278,69,1291,81,1293,94,1291,104,1283,118,1270,130,1273,145,1273,161,1258,181,1252,198,1246,204,1207,213,1219,234,1207,251,1195,269,1174,289,1168,310,1160,327,1138,350,1120,370,1108,
    1298,88,1470,130,1506,133,1513,173,1511,184,1442,196,1478,211,1460,241,1539,232,1410,259,1430,271,1380,277,1389,275,1139,247,1033,268,1091,289,1114,286,1147,292,1121,310,1056,316,1068,319,1081,331,1101,337,997,364,1045,361,1075,355,1063,388,1079,388,1286,208,1296,206,1344,268,1342,283,1345,290,1341,298,1283,301,1314,334,1347,347,1345,358,1283,361,1303,379,1250,394,1263,403,1263,411,1220,409,1192,427,1164,436,1222,439,1213,457,1170,457,1222,469,1179,489,1182,492,1142,469,1124,475,1147,469,1091,492,1079,494,1101,498,1116,496,1126,499,1058,469,1046,484,1283,433,1268,523,1260,556,1222,331,1208,296,1187,295,1222,290,1068,532,1081,544,1098,559,1046,553,1022,553,995,547,1040,570,1058,586,1078,586,973,577,987,577,1005,580,995,595,997,610,1018,613,959,598,947,610,932,616,901,601,906,632,912,634,939,640,954,649,977,652,906,676,917,700,959,697,914,721,891,709,871,703,839,700,800,706,878,734,876,740,868,760,843,760,811,787,777,793,777,814,749,808,719,800,701,853,666,892,645,886,638,910,605,841,583,841,1142,559,937,394,948,403,974,409,901,415,919,418,987,514,1218,547,1225,568
  ], [], rpm),
  4: decode([
    ...band(24, 8, [1028,770, 1018,740, 1040,712, 1070,730]),
    ...band(75, 20, [1080,690, 1140,640, 1200,600, 1260,605]),
    ...band(60, 24, [1260,530, 1330,480, 1400,480, 1450,430, 1500,400, 1568,370]),
    ...band(55, 24, [1290,530, 1350,510, 1420,510]),
    ...band(75, 5, [1390,550, 1420,520, 1460,482, 1510,458, 1568,422]),
    ...spot(1465,481,20,5),
    1289,673,1319,670,1319,655,1301,634,1343,640,1370,640,1382,655,1389,634,1402,622,1362,607,1427,600,1442,643,1470,586,1481,584,1506,562,1506,520,1539,520,1554,493,1473,514,1347,619,1303,598,1339,589,1164,730,1235,742,1205,751,1266,730,1162,700,1111,745,1121,715,1192,676,1205,643,1177,787,1150,797,1124,802,1106,790,1091,785,1081,795,1071,797,1061,802,1028,817,1038,829,1121,850,1164,862,982,898,1028,925,935,964,1045,770,1063,775,1050,742
  ], [
    ...band(240, 5, [0,445, 60,408, 120,362, 180,322, 240,282, 300,248, 333,230]),
    ...band(25, 20, [0,400, 60,370, 130,340, 220,300]),
    21,232,70,238,63,292,77,320,63,317,48,322,55,328,43,343,22,352,30,355,66,355,82,352,90,355,41,385,57,379,163,403,170,433,203,451,215,385,245,322,260,352,103,454,93,475,128,460,128,466,145,484,81,490,36,493,56,499,20,520,61,529,41,457,230,172,285,172,400,94,354,286,255,421,327,496,277,540,283,530
  ], rpm),
  5: decode([
    ...band(22, 3, [1489,695, 1487,750]), ...band(24, 6, [1490,745, 1530,715, 1568,660]),
    1192,988,1240,1012,1286,928,1329,910,1377,880,1422,859,1465,811,1513,838,1551,796,1511,772,1526,769,1539,766,1554,766,1559,637
  ], [
    ...band(45, 12, [0,725, 40,665, 90,638, 140,625]),
    ...band(35, 12, [270,565, 320,550, 350,525, 400,505]),
    ...band(140, 6, [345,525, 400,502, 440,478, 520,440, 600,388]),
    ...band(180, 2, [420,490, 520,438, 600,390, 700,338, 800,285, 886,236]),
    ...band(14, 10, [340,600, 420,590]),
    581,82,499,175,340,247,337,286,323,298,307,334,312,352,335,349,335,406,319,415,318,427,338,469,361,466,252,475,382,484,421,472,337,487,307,508,288,280,631,283,589,346,631,349,740,346,711,409,671,424,554,454,547,487,626,481,581,481,509,499,494,508,532,514,544,535,484,535,469,526,461,547,464,559,427,568,439,553,519,577,551,574,676,613,421,604,394,607,414,607,419,589,391,589,372,613,347,610,349,592,369,583,375,565,302,589,329,601,331,601,325,628,300,643,307,631,330,646,275,673,262,682,270,664,242,676,213,676,218,709,183,718,168,695,190,688,151,703,133,703,123,715,116,724,103,736,135,736,120,763,91,820,86,739,86,754,68,754,51,748,73,724,43,703,33,796,22,766,36,766,46,770,8,769,73,568,78,589,103,607,225,571,247,565,206,601,195,604,238,616,218,634,190,625,178,634,158,649,135,667,98,673,63,673,41,637
  ], rpm),
  6: decode([], [
    ...band(30, 9, [845,515, 880,525, 920,500]),
    ...band(330, 2, [880,520, 920,497, 1000,460, 1100,410, 1200,352, 1290,312, 1385,275]),
    852,148,845,289,885,298,820,352,882,394,895,412,817,418,895,457,910,481,832,487,1213,400,1121,454,1168,469,1019,490,1036,481,1071,496,940,532,974,541,994,568,922,559,902,541,872,562,892,580,890,592,843,570,843,573,842,572,768,601,825,607,827,625,776,631,792,637,743,634,726,643,693,658,678,673,644,688,596,709,723,700,812,691,932,751,853,545,860,550,872,535,853,508,865,505
  ], rpm)
};

const glongPoints = {
  3: decode([
    196,574,211,589,226,598,241,586,259,604,274,592,289,628,304,619,320,604,335,574,345,553,352,610,363,514,382,559,368,634,377,637,400,601,404,601,416,622,421,589,431,586,441,634,446,523,452,559,463,556,471,547,479,589,456,646,466,670,433,697,391,691,438,742,436,796,481,706,492,688,502,736,471,772,477,781,487,787,466,847,444,868,451,874,512,922,532,949,497,991,459,1003,487,430,509,495,514,502,514,538,497,547,530,550,500,616,512,637,535,640,525,667,540,589,525,595,528,598,526,596,547,541,548,547,555,559,553,625,562,622,573,586,578,565,588,577,565,445,583,460,568,487,596,493,602,508,601,525,602,522,583,538,613,559,618,530,628,530,636,571,621,544,636,520,636,451,618,469,646,472,654,484,671,484,655,519,656,518,664,541,671,550,671,526,681,529,688,550,688,466,688,478,709,442,708,463,709,463,699,499,717,508,724,516,726,522,735,493,729,421,741,514,747,487,749,499,752,499,762,439,760,463,767,466,771,469,780,481,785,418,782,472,792,481,798,508,805,517,806,448,808,487,818,421,815,430,825,442,823,484,835,502,840,457,843,460,853,472,856,523,863,505,843,406,863,382,876,379,856,331,921,331,967,349,901,391,881,424,873,439,874,441,896,454,901,442,891,469,891,499,884,511,909,517,911,460,914,475,921,502,927,505,930,451,932,460,937,481,942,436,952,439,955,442,962,430,950,523,950,538,972,454,970,466,965,490,980,421,985,475,993,478,1000,433,987,511,1003,496,1007,472,1016,430,1021,430,1018,430,1022,445,1028,466,1020,517,987,550,1003,562,1018,550,1030,556,1040,421,1040,376,1098,382,1046,484,1046,532,1061,454,1063,475,1058,508,1063,523,1078,460,1079,463,1080,496,1081,499,1096,451,1099,460,1098,496,1096,526,1119,454,1114,499,1116,520,1132,514,1134,517,1134,532,1147,490,1150,490,1152,523,1154,505,1164,460,1169,496,1172,478,1167,550,1187,535,1187,544,1200,535,1205,547,1208,550,1202,556,1217,553,1220,520,1223,494,1224,496,1243,508,1253,526,1245,547,1238,568,1235,583,1251,589,1262,583,1268,583,1271,580,1275,583,1281,589,1299,571,1203,601,1005,595,1033,610,1068,607,1091,640,1114,637,975,625,997,622,935,619,1046,658,1073,664,1056,688,1129,280,1253,286,1205,388,1283,397,1303,421,1314,478,1172,142,1283,166,1301,193,1501,172,1364,340,1458,490,
    820,655,767,697,785,850,775,859,795,874,965,769,942,799,937,811,987,826,916,886,925,883,952,886,930,901,942,898,916,919,917,952,918,958,919,961,926,1030,918,1040,922,1045,934,1057,914,1075,917,1114,932,1144,937,1153,924,1159,939,1171,87,787,246,775,274,790,122,871,166,880,115,916,183,916,254,946,282,934,158,973,266,985,97,1015,173,1018,107,1069,261,1090,335,1090,
    1081,739,1040,757,1050,796,1046,817,1081,793,1101,790,1101,808,1111,709,1119,748,1114,775,1134,775,1137,775,1139,784,1147,799,1121,829,1131,832,1137,841,1157,838,1172,817,1170,820,1177,817,1189,808,1194,808,1159,763,1182,757,1150,688,1147,683,1170,694,1174,676,1192,697,1215,679,1230,655,1236,640,1237,634,1240,697,1260,673,1268,691,1276,694,1286,667,1314,658,1288,748,1286,727,1299,709,1033,874,1078,871,1058,892,1063,949,1030,958,1129,868,1127,928,1141,928,1112,946,1116,946,1123,943,1145,949,1149,955,1139,979,1162,988,1159,1012,1177,1024,1121,1066,1033,1072,1276,946,1253,976,1225,832,1248,820,1260,1198,1283,1195,1192,1249,1311,1096,1303,1018
  ], [], glong),
  4: decode([
    1296,625,1311,613,1326,622,1326,637,1341,646,1347,538,1374,544,1415,553,1387,580,1402,592,1362,595,1387,610,1384,628,1417,634,1402,646,1435,631,1447,595,1430,601,1470,595,1496,589,1511,604,1478,625,1463,634,1448,652,1389,661,1402,667,1400,688,1415,700,1432,658,1458,664,1476,658,1485,673,1493,658,1503,649,1506,628,1498,679,1520,640,1533,634,1375,682,1347,697,1359,697,1442,682,1458,682,1442,718,1359,730,1367,748,1384,742,1392,745,1404,748,1412,763,1473,730,1483,745,1488,754,1440,784,1326,757,1321,784,1324,796,1294,799,1362,793,1392,799,1374,814,1347,835,1359,832,1321,817,1316,820,1326,826,1425,823,1349,862,1339,877,1344,901,1367,898,1374,913,1417,865,1435,886,1448,895,1306,922,1316,922,1326,923,1339,925,1349,931,1356,925,1329,943,1339,949,1342,949,1352,958,1374,946,1331,973,1344,985,1337,1006,1352,1015,1397,1021,1526,724,1513,751,1485,796,1523,781,1521,799,1526,847,1513,892,1541,892,1534,922,1508,922,1503,934,1493,925,1544,985,1521,1057,
    ...band(22, 14, [1505,640, 1568,670])
  ], [
    ...band(170, 17, [0,640, 30,665, 70,692, 120,715, 170,738, 230,765, 290,782, 330,810]),
    22,892,15,922,66,946,27,985,63,997,4,1057,71,1082,76,1087,66,1117,64,1132,41,1117,76,850,8,847,8,724,5,796,4,798,135,643,197,688,210,715,260,721,272,841,43,754,48,763,81,757
  ], glong),
  5: decode([1556,832,1559,910,1488,1009,1498,1015,1567,958,1561,1051,1558,1117], [
    ...band(45, 22, [345,810, 400,825, 455,825]),
    ...band(240, 16, [400,825, 455,822, 500,840, 560,862, 620,878, 700,905, 760,925, 810,940, 850,958, 885,972]),
    ...spot(455,822,12,5),
    38,832,86,838,103,847,138,850,100,883,105,885,115,877,125,895,63,895,41,910,93,922,79,940,48,958,98,1000,68,1030,43,1051,135,1021,255,1024,302,1009,252,1213,342,1042,354,1051,354,973,407,1099,529,1147,541,1228,178,493,290,556,332,541,347,565,534,628,551,739,519,784,317,721,335,718,340,688,351,680,365,715,349,739,287,745,319,754,372,754,389,757,411,754,407,763,397,775,436,781,205,664,225,658,238,646,96,664,73,667,58,658,173,676,93,796,111,799,158,793,165,801,195,814,218,844,247,829,112,760,120,763,474,961,501,946,541,928,564,910,524,910,494,886,551,892,447,868,357,925,375,913,362,898,379,898,384,898,409,892,421,883,307,862,337,877,331,858,364,862,646,949,727,865,740,892,731,949,726,961,758,970,787,988,798,988,822,988,815,1036,835,931
  ], glong),
  6: decode([], [
    ...band(190, 15, [855,1000, 920,975, 980,985, 1040,1005, 1100,1010, 1170,1045, 1230,1050, 1250,1095, 1300,1105, 1350,1105, 1385,1130]),
    845,742,890,868,860,895,872,931,967,913,907,940,904,946,827,1012,865,1030,895,1048,972,1039,979,1069,989,1078,996,1081,1006,1093,1019,1102,1014,1063,1024,1064,1034,1063,1046,1162,852,1183,1260,1165,1111,1057,1173,1090,1302,1054,1305,1069,1330,1078,1357,1087
  ], glong)
};

const tenths = [1, .9, .8, .7, .6, .5, .4, .3, .2, .1, 0];
const speedAxis = { min: 66.3, max: 256.5, grid: 20, first: 80, step: 20, minor: 4 };

function draw() {
  histogram('histo-1st', {
    title: "0 Samples, Zoom Linked, Gated 'is1st > 0'",
    x: { min: 0, max: 1 }, y: { min: 0, max: 1, step: .2, minor: .04, digits: 1 },
    counts: Array(12).fill(0), levels: tenths, total: 1, bins: {}
  });
  histogram('histo-3rd', {
    title: "315 Samples, Zoom Linked, Gated 'is3rdWOT > 0'",
    x: { min: 2800, max: 7005, grid: 200, first: 3000, step: 1000 },
    y: { min: 0, max: 20, step: 5, minor: 1, digits: 0 },
    counts: [174, 25, 21, 15, 7, 3, 5, 11, 5, 10, 8, 31],
    levels: [.6, .57, .54, .51, .48, .45, .42, .39, .36, .33, .3], total: 315,
    bins: {
      3000: [[11,1]], 3200: [[11,1],[10,1],[9,1],[8,1]], 3400: [[11,3],[10,1],[9,1],[2,1],[1,1]],
      3600: [[11,3],[3,1],[2,3],[1,3]], 3800: [[11,1],[7,1],[4,1],[2,2],[1,1]],
      4000: [[11,1],[7,1],[6,1],[4,1],[2,2],[1,2],[0,3]],
      4200: [[11,2],[9,1],[6,1],[4,2],[3,2],[2,2],[1,1],[0,8]],
      4400: [[11,2],[9,1],[7,2],[5,3],[4,1],[3,2],[2,4],[1,2],[0,8]],
      4600: [[3,1],[1,4],[0,18]], 4800: [[0,14]], 5000: [[9,2],[0,14]], 5200: [[9,1],[3,1],[0,15]],
      5400: [[11,5],[10,1],[8,1],[4,1],[0,16]], 5600: [[11,6],[10,3],[8,2],[0,18]],
      5800: [[11,4],[10,2],[9,1],[7,1],[6,1],[2,2],[1,2],[0,18]],
      6000: [[8,1],[7,2],[3,1],[4,1],[2,1],[0,24]],
      6200: [[11,1],[8,1],[7,2],[6,1],[4,1],[3,1],[2,2],[1,2],[0,14]],
      6400: [[11,1],[6,1],[4,1],[3,2],[2,1],[1,7],[0,3]],
      6600: [[11,1],[9,1],[6,1],[3,2],[2,1],[0,1]]
    }
  });
  histogram('histo-4th', {
    title: "433 Samples, Zoom Linked, Gated 'is4th > 0'",
    x: { min: 3200, max: 7200, grid: 200, first: 3400, step: 1000 },
    y: { min: 0, max: 20, step: 5, minor: 1, digits: 0 },
    counts: [0, 2, 0, 4, 8, 55, 151, 62, 53, 19, 4, 75], levels: tenths, total: 433,
    bins: {
      4000: [[11,1]], 4200: [[11,2]], 4400: [[11,4]], 4600: [[11,12],[9,1]],
      4800: [[11,5],[10,1],[9,3],[8,6],[7,3],[6,4],[5,1]],
      5000: [[11,6],[8,7],[7,5],[6,5],[4,1],[3,2]],
      5200: [[11,7],[10,1],[8,4],[7,7],[6,7],[5,6],[4,3],[1,1]],
      5400: [[11,5],[10,1],[9,1],[8,7],[7,3],[6,6],[5,4],[4,1]],
      5600: [[11,10],[9,7],[8,13],[7,12],[6,14],[5,21],[4,1],[3,1],[1,1]],
      5800: [[11,6],[9,2],[8,7],[7,11],[6,19],[5,18],[4,1],[3,1]],
      6000: [[11,4],[9,3],[8,6],[7,5],[6,33],[5,5]],
      6200: [[11,5],[10,1],[9,2],[8,2],[7,4],[6,37],[5,1]],
      6400: [[11,3],[9,1],[7,12],[6,26]], 6600: [[11,4]], 7000: [[11,1]]
    }
  });
  scatter('scatter-rpm', {
    title: '1905 Samples, Zoom Linked', tone: 'purple', channel: 'RPMS [1/min]', value: '5812', valueX: 113, tagWidth: 158,
    x: speedAxis, y: { min: 2949, max: 7133, step: 200, minor: 40, digits: 0 },
    counts: [251, 429, 433, 729, 0, 0], points: rpmPoints, cursor: 5812, cursorColor: '#b070ff'
  });
  scatter('scatter-glong', {
    title: "1236 Samples, Zoom Linked, Gated 'isWOT > 0'", tone: 'orange', channel: 'glong [G]', value: '0.23', valueX: 90, tagWidth: 135,
    x: speedAxis, y: { min: .001, max: .999, step: .1, minor: .02, digits: 1 },
    counts: [223, 329, 317, 315, 0, 0], points: glongPoints, cursor: .23, cursorColor: '#ffa030'
  });
}
draw();
addEventListener('resize', draw);
```
